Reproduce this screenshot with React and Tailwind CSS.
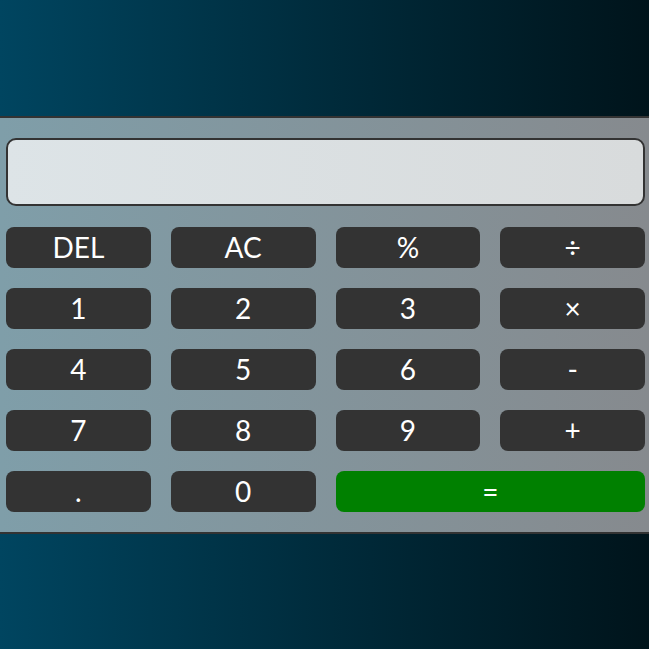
import React, { useState } from 'react';

const keys = [
    'DEL', 'AC', '%', '÷',
    '1', '2', '3', '×',
    '4', '5', '6', '-',
    '7', '8', '9', '+',
    '.', '0',
];

const Key = ({ label, onClick }) => (
    <button
        onClick={() => onClick(label)}
        className="h-[41px] rounded-lg bg-[#333333] text-white text-[28px] leading-none flex items-center justify-center"
    >
        {label}
    </button>
);

export default function App() {
    const [value, setValue] = useState('');

    const press = (k) => {
        if (k === 'AC') return setValue('');
        if (k === 'DEL') return setValue((v) => v.slice(0, -1));
        setValue((v) => v + k);
    };

    return (
        <div
            className="min-h-screen flex items-center bg-gradient-to-r from-[#004560] to-[#00141b]"
            style={{ fontFamily: 'Lato, "Open Sans", sans-serif' }}
        >
            <div className="w-full border-y-2 border-[#333333] bg-gradient-to-r from-[#7f9ea9] to-[#868a8e] pl-[6px] pr-[4px] py-[20px]">
                <input
                    readOnly
                    value={value}
                    className="w-full h-[68px] rounded-[10px] border-2 border-[#333333] bg-gradient-to-r from-[#dde4e7] to-[#d8dbdc] px-4 text-right text-[32px] text-[#333] outline-none"
                />
                <div className="mt-[21px] grid grid-cols-4 gap-x-[20px] gap-y-[20px]">
                    {keys.map((k) => (
                        <Key key={k} label={k} onClick={press} />
                    ))}
                    <button
                        onClick={() => press('=')}
                        className="col-span-2 h-[41px] rounded-lg bg-[#008000] text-white text-[28px] leading-none flex items-center justify-center"
                    >
                        =
                    </button>
                </div>
            </div>
        </div>
    );
}
